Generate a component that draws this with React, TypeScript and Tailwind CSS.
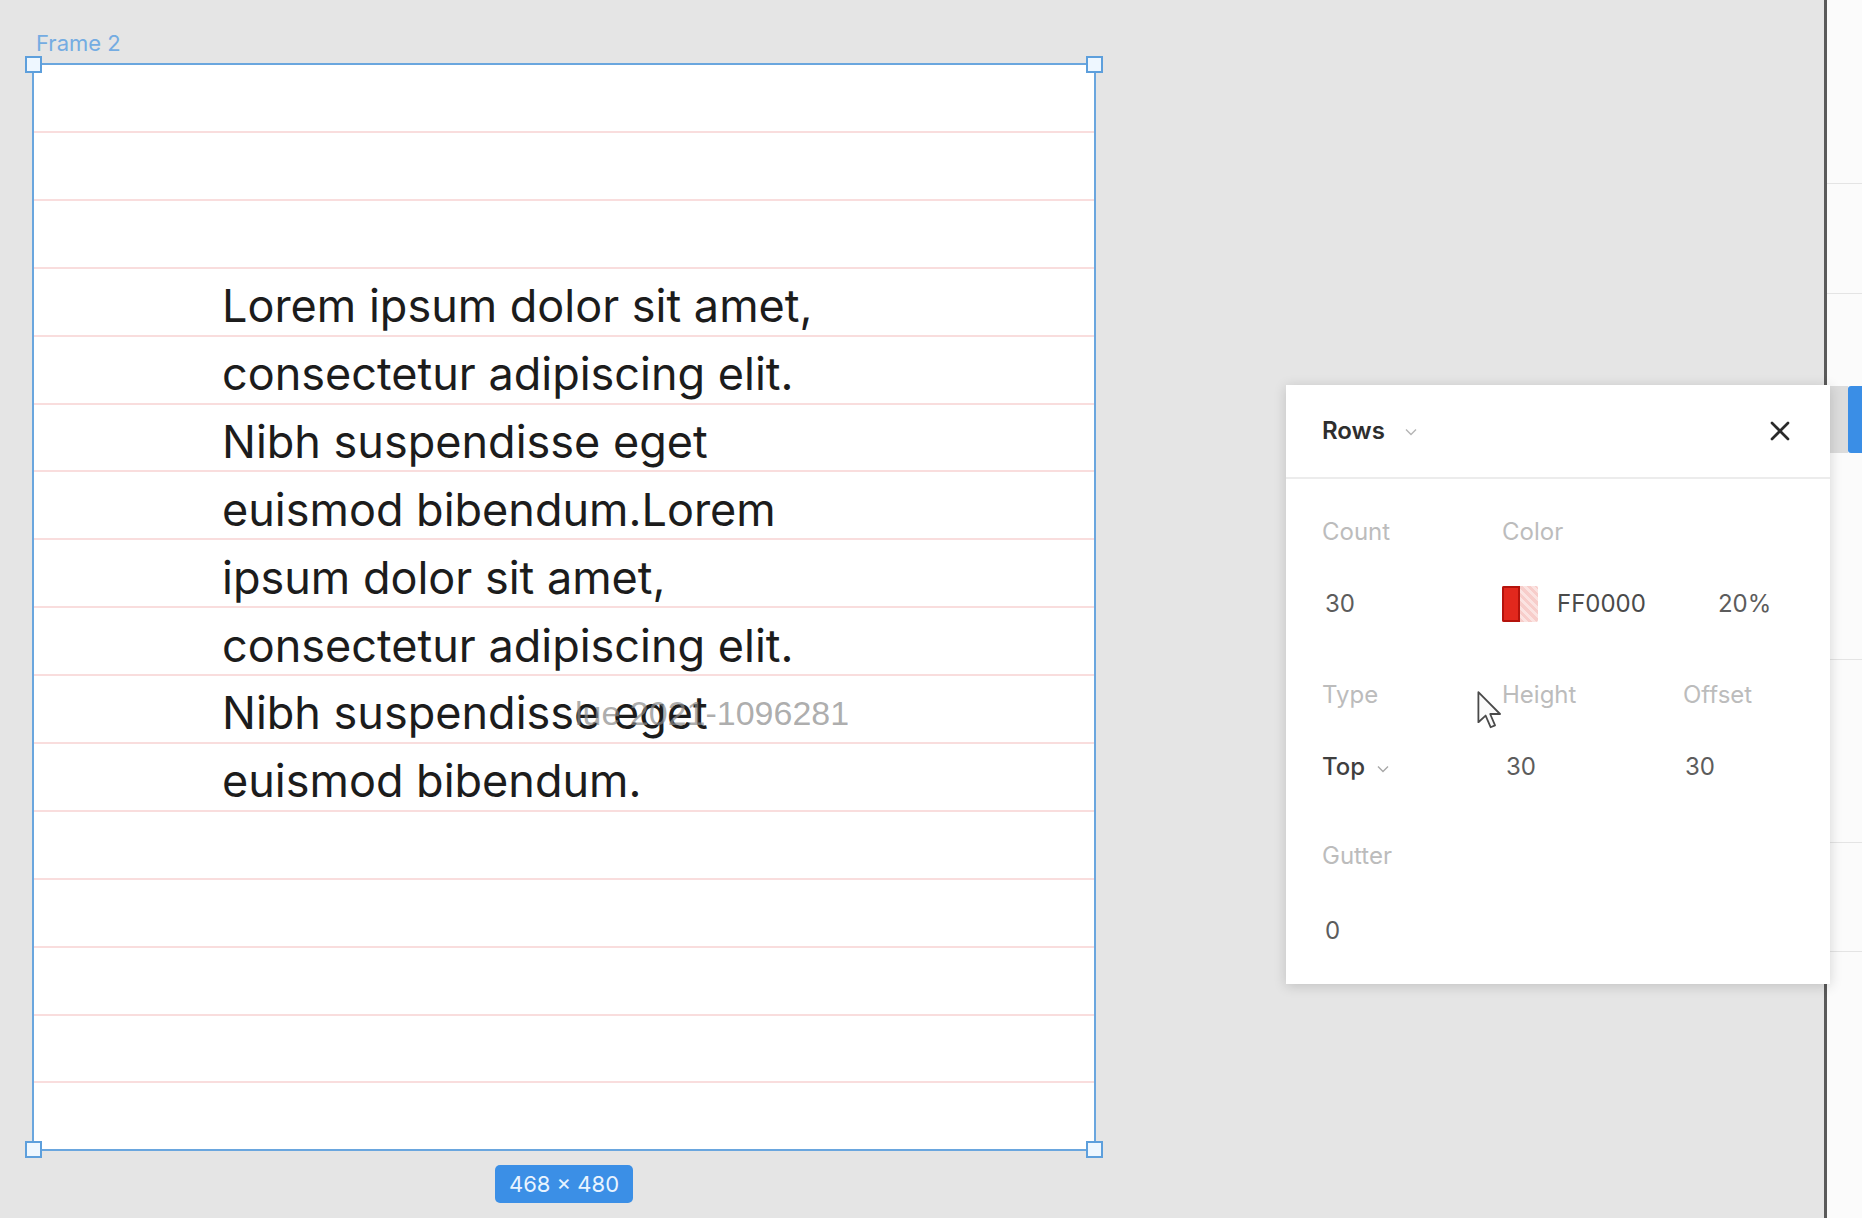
import { X } from 'lucide-react';

const rowLines = Array.from({ length: 15 }, (_, i) => i);

const textLines = [
	'Lorem ipsum dolor sit amet,',
	'consectetur adipiscing elit.',
	'Nibh suspendisse eget',
	'euismod bibendum.Lorem',
	'ipsum dolor sit amet,',
	'consectetur adipiscing elit.',
	'Nibh suspendisse eget',
	'euismod bibendum.',
];

function Chevron({ className }: { className?: string }) {
	return (
		<svg viewBox="0 0 12 8" className={className} fill="none">
			<polyline points="1,1.5 6,6.5 11,1.5" stroke="currentColor" strokeWidth="1.4" />
		</svg>
	);
}

function Handle({ className }: { className: string }) {
	return (
		<div
			className={`absolute h-[17px] w-[17px] border-2 border-[#5d9fdc] bg-[#eef7ff] ${className}`}
		/>
	);
}

function Frame() {
	return (
		<div className="absolute left-[32px] top-[28px]">
			<div className="mb-[5px] pl-[4px] text-[22px] leading-[30px] text-[#74ace2]">Frame 2</div>
			<div className="relative h-[1088px] w-[1064px] border-2 border-[#6aa6de] bg-white">
				<div className="absolute inset-0 flex flex-col pt-[66px]">
					{rowLines.map(i => (
						<div key={i} className="h-[67.9px] shrink-0 border-t-2 border-[#f9dddd]" />
					))}
				</div>
				<div className="relative pl-[188px] pt-[207px] text-[45px] leading-[67.9px] text-[#1c1c1c]">
					{textLines.map((line, i) => (
						<div key={i} className="whitespace-nowrap">
							{line}
						</div>
					))}
				</div>
				<div className="absolute left-[541px] top-[628px] whitespace-nowrap font-['Liberation_Sans',sans-serif] text-[34px] leading-[40px] text-[#8a8a8a]/70">
					lue 2021-1096281
				</div>
				<Handle className="-left-[9px] -top-[9px]" />
				<Handle className="-right-[9px] -top-[9px]" />
				<Handle className="-bottom-[9px] -left-[9px]" />
				<Handle className="-bottom-[9px] -right-[9px]" />
			</div>
			<div className="mt-[14px] flex justify-center">
				<div className="flex h-[38px] w-[138px] items-center justify-center rounded-[5px] bg-[#3b8fe6] text-[22px] text-[#e9f4ff]">
					468 × 480
				</div>
			</div>
		</div>
	);
}

function Label({ children }: { children: React.ReactNode }) {
	return <div className="h-[30px] leading-[30px] text-[#bcbcbc]">{children}</div>;
}

function RowsPanel() {
	return (
		<div className="absolute left-[1286px] top-[385px] z-10 h-[599px] w-[544px] bg-white text-[24px] shadow-[0_2px_12px_rgba(0,0,0,0.16)]">
			<div className="flex h-[94px] items-center justify-between border-b-2 border-[#ececec] pl-[36px] pr-[34px]">
				<div className="flex items-center gap-[20px]">
					<span className="font-semibold text-[#2e2e2e]">Rows</span>
					<Chevron className="mt-[2px] h-[8px] w-[12px] text-[#b5b5b5]" />
				</div>
				<X className="h-[32px] w-[32px] text-[#2a2a2a]" strokeWidth={2} />
			</div>
			<div className="grid grid-cols-[180px_181px_1fr] pl-[36px] pt-[38px]">
				<Label>Count</Label>
				<Label>Color</Label>
				<div />
				<div className="mt-[42px] h-[30px] pl-[3px] leading-[30px] text-[#5c5c5c]">30</div>
				<div className="col-span-2 mt-[42px] flex h-[30px] items-center">
					<div className="flex h-[36px] w-[36px] shrink-0 overflow-hidden rounded-[2px]">
						<div className="w-[18px] border-2 border-[#b4130c] bg-[#e2281d]" />
						<div className="w-[18px] bg-[repeating-linear-gradient(45deg,#f7cdca_0,#f7cdca_3px,#fbe3e1_3px,#fbe3e1_6px)]" />
					</div>
					<span className="ml-[19px] text-[#4a4a4a]">FF0000</span>
					<span className="ml-[72px] text-[#5c5c5c]">20%</span>
				</div>

				<div className="mt-[61px]">
					<Label>Type</Label>
				</div>
				<div className="mt-[61px]">
					<Label>Height</Label>
				</div>
				<div className="mt-[61px]">
					<Label>Offset</Label>
				</div>
				<div className="mt-[42px] flex h-[30px] items-center gap-[12px]">
					<span className="font-medium text-[#3f3f3f]">Top</span>
					<Chevron className="mt-[4px] h-[8px] w-[12px] text-[#a8a8a8]" />
				</div>
				<div className="mt-[42px] h-[30px] pl-[4px] leading-[30px] text-[#5c5c5c]">30</div>
				<div className="mt-[42px] h-[30px] pl-[2px] leading-[30px] text-[#5c5c5c]">30</div>

				<div className="col-span-3 mt-[59px]">
					<Label>Gutter</Label>
				</div>
				<div className="col-span-3 mt-[45px] h-[30px] pl-[3px] leading-[30px] text-[#5c5c5c]">0</div>
			</div>
		</div>
	);
}

function Cursor() {
	return (
		<svg
			viewBox="0 0 24 36"
			className="absolute left-[1476px] top-[690px] z-20 h-[40px] w-[27px]"
		>
			<path
				d="M2 2 L2 29 L8.5 23 L13 33.5 L17 31.8 L12.6 21.6 L21.5 21.6 Z"
				fill="#fafafa"
				stroke="#4a4a4a"
				strokeWidth="1.6"
				strokeLinejoin="round"
			/>
		</svg>
	);
}

function Sidebar() {
	return (
		<aside className="flex w-[38px] shrink-0 flex-col border-l-[3px] border-[#5a5a5a] bg-[#fbfbfb]">
			<div className="h-[184px] border-b border-[#e4e4e4]" />
			<div className="h-[110px] border-b border-[#e4e4e4]" />
			<div className="h-[366px] border-b border-[#e4e4e4] pt-[92px]">
				<div className="flex h-[67px]">
					<div className="w-[21px] bg-[#dcdcdc]" />
					<div className="flex-1 rounded-l-[3px] bg-[#3a8ee6]" />
				</div>
			</div>
			<div className="h-[183px] border-b border-[#e4e4e4]" />
			<div className="h-[109px] border-b border-[#e4e4e4]" />
			<div className="flex-1" />
		</aside>
	);
}

export default function App() {
	return (
		<div className="relative flex h-[1218px] w-[1862px] overflow-hidden bg-[#e5e5e5] font-['Inter','Noto_Sans',sans-serif]">
			<main className="relative flex-1">
				<Frame />
			</main>
			<Sidebar />
			<RowsPanel />
			<Cursor />
		</div>
	);
}
